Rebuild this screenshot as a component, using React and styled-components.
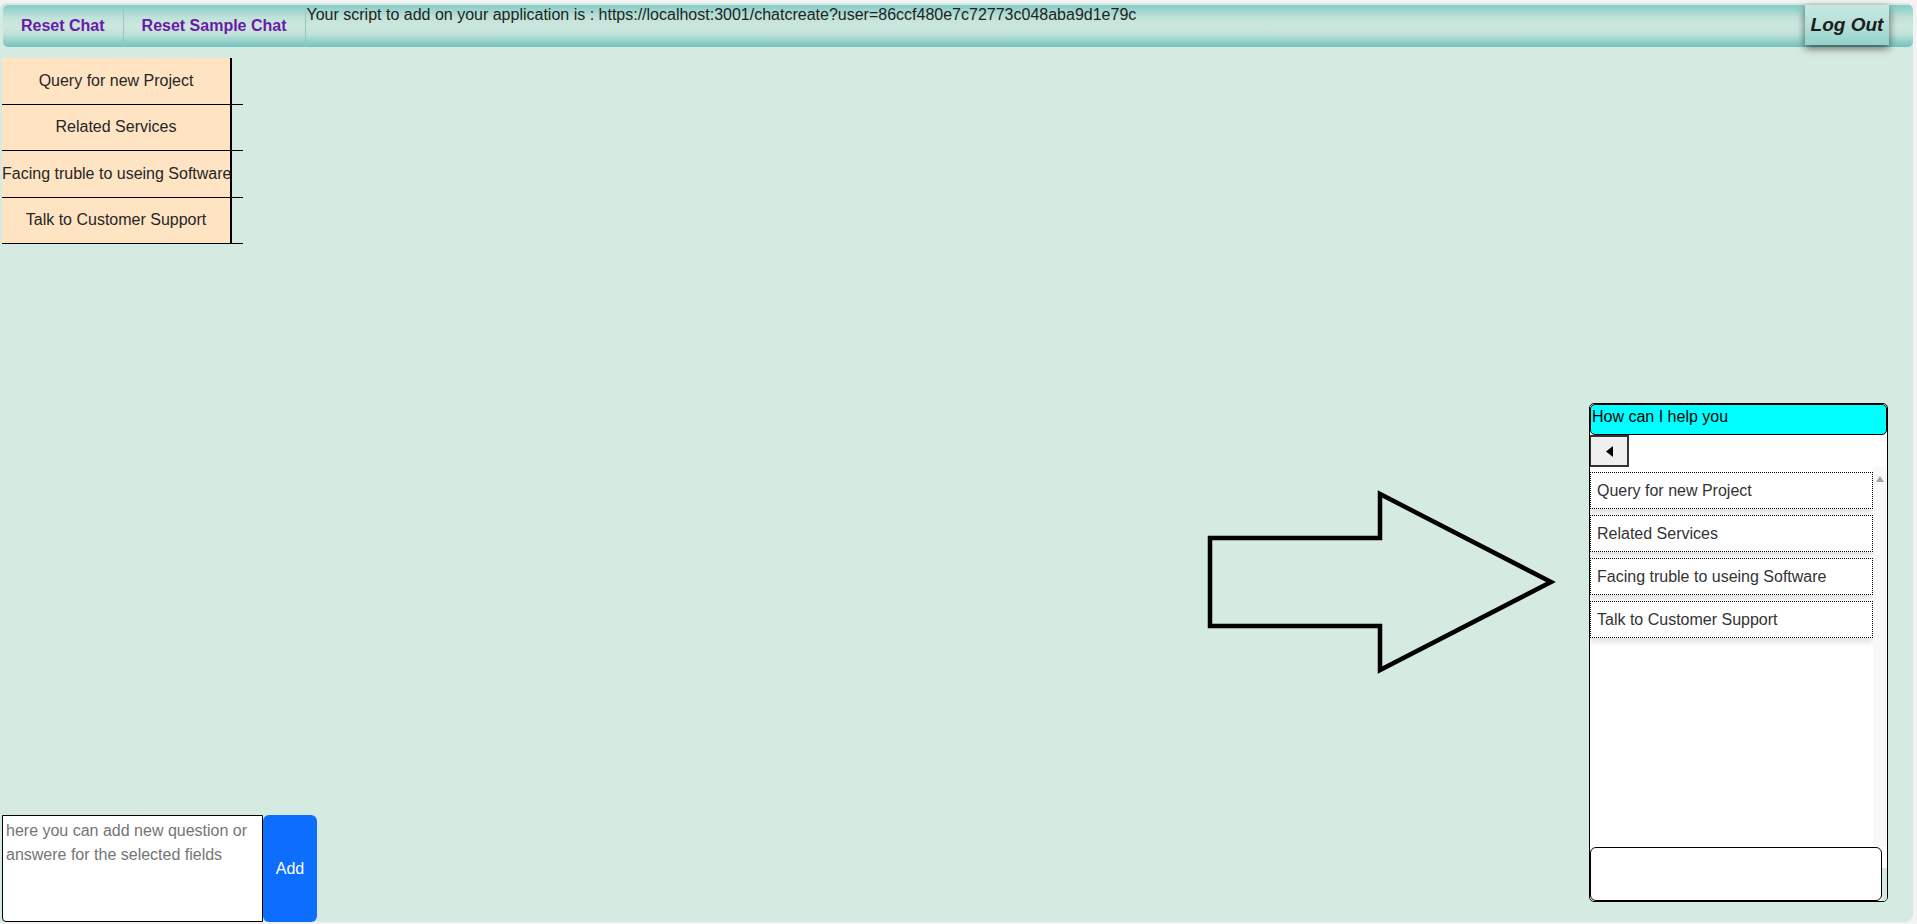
import React, { useState } from "react";
import styled, { createGlobalStyle } from "styled-components";

const GlobalStyle = createGlobalStyle`
    html, body {
        margin: 0;
        padding: 0;
        background: #f3f3f3;
        font-family: "Liberation Sans", Arial, sans-serif;
        overflow: hidden;
    }
`

const Pagina = styled.div`
    width: 1913px;
    height: 919px;
    margin-top: 3px;
    background: #d5eae0;
    border-radius: 6px 6px 8px 0;
    display: flex;
    flex-direction: column;
`

const Cabecalho = styled.header`
    display: flex;
    align-items: stretch;
    height: 42px;
    margin: 2px 0 0 3px;
    border-radius: 5px;
    background: linear-gradient(to bottom, #86ccc7 0%, #bfe2d9 30%, #cde8de 50%, #bfe2d9 70%, #74c1bd 100%);
`

const BotaoCabecalho = styled.button`
    padding: 0 18px;
    border: none;
    border-right: 1px solid #93c9c4;
    background: transparent;
    color: #6a1aa9;
    font-family: "Liberation Sans", Arial, sans-serif;
    font-weight: 700;
    font-size: 16px;
    white-space: nowrap;
    cursor: pointer;
`

const TextoScript = styled.span`
    align-self: flex-start;
    padding: 1px 2px 0 1px;
    font-size: 16px;
    color: #222;
    white-space: nowrap;
`

const BotaoSair = styled.button`
    margin-left: auto;
    margin-right: 24px;
    width: 84px;
    height: 40px;
    padding: 0;
    border: none;
    background: linear-gradient(to bottom, #c6e8e1 0%, #b5e0d9 50%, #93d1cb 100%);
    box-shadow: 0 3px 8px rgba(0, 0, 0, 0.6);
    font-family: "Liberation Sans", Arial, sans-serif;
    font-weight: 700;
    font-style: italic;
    font-size: 19px;
    color: #1c1c1c;
    white-space: nowrap;
    cursor: pointer;
`

const Conteudo = styled.main`
    display: flex;
    height: 875px;
`

const ColunaEsquerda = styled.div`
    width: 318px;
    margin-left: 2px;
    display: flex;
    flex-direction: column;
    justify-content: space-between;
`

const Menu = styled.nav`
    margin-top: 11px;
    width: 241px;
    display: flex;
    flex-direction: column;
`

const LinhaMenu = styled.div`
    height: 46.5px;
    box-sizing: border-box;
    border-bottom: 1.5px solid #000;
    display: flex;
`

const BotaoMenu = styled.button`
    width: 230px;
    height: 100%;
    padding: 0;
    border: none;
    border-right: 2px solid #000;
    background: ${props => props.$ativo ? "#ffd8a8" : "#ffe4c4"};
    font-family: "Liberation Sans", Arial, sans-serif;
    font-size: 16px;
    color: #262626;
    white-space: nowrap;
    text-align: center;
    cursor: pointer;
`

const Composicao = styled.div`
    display: flex;
    height: 107px;
`

const CampoPergunta = styled.textarea`
    width: 261px;
    box-sizing: border-box;
    border: 1.5px solid #000;
    border-radius: 0 0 0 4px;
    padding: 3px 3px;
    font-family: "Liberation Sans", Arial, sans-serif;
    font-size: 16px;
    line-height: 24px;
    resize: none;
    outline: none;

    &::placeholder {
        color: #757575;
    }
`

const BotaoAdicionar = styled.button`
    width: 54px;
    border: none;
    border-radius: 6px;
    background: #0d6efd;
    color: #fff;
    font-family: "Liberation Sans", Arial, sans-serif;
    font-size: 16px;
    cursor: pointer;
`

const ColunaSeta = styled.div`
    flex: 1;
    display: flex;
    justify-content: flex-end;
    align-items: flex-start;
    padding-top: 443px;
    padding-right: 33px;
`

const Widget = styled.section`
    margin-top: 356px;
    margin-right: 25px;
    width: 299px;
    height: 499px;
    box-sizing: border-box;
    border: 1px solid #000;
    border-radius: 5px;
    background: #fff;
    display: flex;
    flex-direction: column;
    overflow: hidden;
`

const TopoWidget = styled.div`
    height: 31px;
    box-sizing: border-box;
    padding: 3px 1px 0;
    background: #00ffff;
    border: 1px solid #000;
    border-radius: 5px;
    font-size: 16px;
    color: #000;
`

const BotaoVoltar = styled.button`
    width: 40px;
    height: 32px;
    margin-left: -1px;
    padding: 0;
    border: 2px solid #333;
    background: #efefef;
    display: flex;
    align-items: center;
    justify-content: center;
    cursor: pointer;
`

const AreaLista = styled.div`
    height: 380px;
    display: flex;
`

const Lista = styled.div`
    flex: 1;
    padding-top: 5px;
`

const Opcao = styled.div`
    height: 37px;
    box-sizing: border-box;
    margin-bottom: 6px;
    padding-left: 6px;
    border: 1px dotted #000;
    box-shadow: 0 4px 5px rgba(0, 0, 0, 0.12);
    display: flex;
    align-items: center;
    font-size: 16px;
    color: #333;
    cursor: pointer;
`

const TrilhoRolagem = styled.div`
    width: 14px;
    background: #f8f8f8;
    display: flex;
    justify-content: center;
    padding-top: 9px;
    box-sizing: border-box;
`

const LinhaResposta = styled.div`
    flex: 1;
    display: flex;
`

const CampoResposta = styled.textarea`
    flex: 1;
    box-sizing: border-box;
    border: 1.5px solid #000;
    border-radius: 6px;
    background: #fff;
    resize: none;
    outline: none;
    font-family: "Liberation Sans", Arial, sans-serif;
    font-size: 16px;
`

const SobraResposta = styled.div`
    width: 5px;
    background: linear-gradient(to bottom, #fff 21px, #d5eae0 21px);
`

const opcoes = [
    "Query for new Project",
    "Related Services",
    "Facing truble to useing Software",
    "Talk to Customer Support",
]

function App() {
    const [selecionada, setSelecionada] = useState(null)

    return (
        <>
            <GlobalStyle />
            <Pagina>
                <Cabecalho>
                    <BotaoCabecalho>Reset Chat</BotaoCabecalho>
                    <BotaoCabecalho>Reset Sample Chat</BotaoCabecalho>
                    <TextoScript>Your script to add on your application is : https://localhost:3001/chatcreate?user=86ccf480e7c72773c048aba9d1e79c</TextoScript>
                    <BotaoSair>Log Out</BotaoSair>
                </Cabecalho>
                <Conteudo>
                    <ColunaEsquerda>
                        <Menu>
                            {opcoes.map((texto, i) => (
                                <LinhaMenu key={texto}>
                                    <BotaoMenu $ativo={selecionada === i} onClick={() => setSelecionada(i)}>{texto}</BotaoMenu>
                                </LinhaMenu>
                            ))}
                        </Menu>
                        <Composicao>
                            <CampoPergunta placeholder="here you can add new question or answere for the selected fields" />
                            <BotaoAdicionar>Add</BotaoAdicionar>
                        </Composicao>
                    </ColunaEsquerda>
                    <ColunaSeta>
                        <svg width="350" height="186" viewBox="0 0 350 186">
                            <polygon points="4,48 174,48 174,4 345,92 174,180 174,136 4,136" fill="none" stroke="#000" strokeWidth="4.5" />
                        </svg>
                    </ColunaSeta>
                    <Widget>
                        <TopoWidget>How can I help you</TopoWidget>
                        <BotaoVoltar>
                            <svg width="7" height="11" viewBox="0 0 7 11">
                                <polygon points="7,0 0,5.5 7,11" fill="#000" />
                            </svg>
                        </BotaoVoltar>
                        <AreaLista>
                            <Lista>
                                {opcoes.map(texto => <Opcao key={texto}>{texto}</Opcao>)}
                            </Lista>
                            <TrilhoRolagem>
                                <svg width="8" height="6" viewBox="0 0 8 6">
                                    <polygon points="0,6 4,0 8,6" fill="#a3a3a3" />
                                </svg>
                            </TrilhoRolagem>
                        </AreaLista>
                        <LinhaResposta>
                            <CampoResposta />
                            <SobraResposta />
                        </LinhaResposta>
                    </Widget>
                </Conteudo>
            </Pagina>
        </>
    )
}

export default App;
